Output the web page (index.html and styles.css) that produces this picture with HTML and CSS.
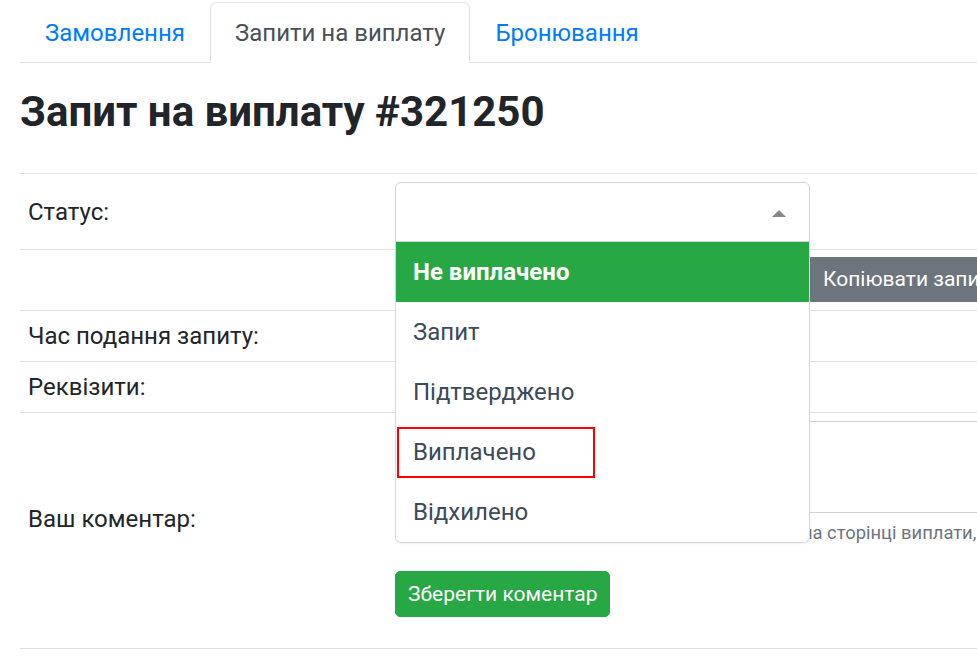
FILE: index.html
```html
<!DOCTYPE html>
<html lang="uk">
<head>
<meta charset="utf-8">
<title>Запит на виплату #321250</title>
<link rel="stylesheet" href="styles.css">
</head>
<body>
<div class="page">
  <nav class="tabs">
    <a class="tab" href="#">Замовлення</a>
    <a class="tab active" href="#">Запити на виплату</a>
    <a class="tab" href="#">Бронювання</a>
  </nav>

  <h1 class="title">Запит на виплату #321250</h1>

  <div class="details">
    <div class="row row-ctrl">
      <div class="label">Статус:</div>
      <div class="value">
        <div class="select-wrap">
          <div class="select open"><span class="arrow"></span></div>
          <ul class="dropdown">
            <li class="opt selected">Не виплачено</li>
            <li class="opt">Запит</li>
            <li class="opt">Підтверджено</li>
            <li class="opt">Виплачено</li>
            <li class="opt">Відхилено</li>
            <li class="mark"></li>
          </ul>
        </div>
      </div>
    </div>

    <div class="row row-ctrl">
      <div class="label"></div>
      <div class="value inline">
        <input class="link-input" type="text" readonly value="">
        <button class="btn btn-gray">Копіювати запит</button>
      </div>
    </div>

    <div class="row">
      <div class="label">Час подання запиту:</div>
      <div class="value"></div>
    </div>

    <div class="row">
      <div class="label">Реквізити:</div>
      <div class="value"></div>
    </div>

    <div class="row row-comment">
      <div class="label">Ваш коментар:</div>
      <div class="value">
        <textarea class="comment" rows="2"></textarea>
        <small class="help">Ваш коментар буде відображатися партнерові на сторінці виплати, а також у листі-сповіщенні.</small>
        <button class="btn btn-green">Зберегти коментар</button>
      </div>
    </div>
  </div>
</div>
</body>
</html>
```

FILE: styles.css
```css
html, body {
  margin: 0;
  padding: 0;
  overflow: hidden;
  background: #fff;
}

body {
  font-family: Roboto, "Noto Sans", "Liberation Sans", sans-serif;
  font-size: 24px;
  line-height: 1.5;
  color: #212529;
}

.page {
  width: 1200px;
  margin-left: 20px;
  padding-top: 2px;
}

/* Tabs */
.tabs {
  display: flex;
  border-bottom: 1px solid #dee2e6;
}

.tab {
  display: block;
  padding: 11.5px 24px;
  margin-bottom: -1px;
  border: 1px solid transparent;
  border-top-left-radius: 6px;
  border-top-right-radius: 6px;
  color: #007bff;
  text-decoration: none;
  line-height: 36px;
}

.tab.active {
  color: #495057;
  background: #fff;
  border-color: #dee2e6 #dee2e6 #fff;
}

/* Heading */
.title {
  margin: 24px 0 36px;
  font-size: 42px;
  font-weight: 700;
  line-height: 1.2;
  color: #212529;
}

/* Detail rows */
.details {
  border-bottom: 1px solid #dee2e6;
}

.row {
  display: grid;
  grid-template-columns: 375px 1fr;
  align-items: center;
  border-top: 1px solid #dee2e6;
  padding: 7.2px 0;
  min-height: 36px;
}

.label {
  padding-left: 8px;
  line-height: 36px;
}

.value {
  min-width: 0;
}

.inline {
  display: flex;
  align-items: center;
}

/* Select */
.select-wrap {
  position: relative;
  width: 415px;
}

.select {
  box-sizing: border-box;
  height: 60px;
  border: 1px solid #ced4da;
  border-radius: 6px;
  background: #fff;
  position: relative;
}

.select.open {
  border-bottom-left-radius: 0;
  border-bottom-right-radius: 0;
}

.arrow {
  position: absolute;
  right: 23px;
  top: 27px;
  width: 0;
  height: 0;
  border-style: solid;
  border-width: 0 7px 7px 7px;
  border-color: transparent transparent #888 transparent;
}

.dropdown {
  position: absolute;
  left: 0;
  top: 60px;
  z-index: 10;
  box-sizing: border-box;
  width: 415px;
  margin: 0;
  padding: 0;
  list-style: none;
  background: #fff;
  border: 1px solid #d6d9dc;
  border-top: none;
  border-bottom-left-radius: 6px;
  border-bottom-right-radius: 6px;
  box-shadow: 0 1px 2px rgba(0, 0, 0, 0.06);
}

.opt {
  padding: 12px 17px;
  line-height: 36px;
  color: #3c4a5a;
}

.opt.selected {
  background: #28a745;
  color: #fff;
  font-weight: 700;
}

.mark {
  position: absolute;
  left: 1px;
  top: 185px;
  width: 194px;
  height: 47px;
  border: 2px solid #ff0000;
}

/* Row 2 */
.link-input {
  box-sizing: border-box;
  width: 415px;
  height: 45px;
  margin: 0;
  border: 1px solid #ced4da;
  border-radius: 5px;
  font: inherit;
  background: #fff;
}

.btn {
  display: inline-block;
  box-sizing: border-box;
  height: 45.5px;
  padding: 0 12px;
  border: 1px solid transparent;
  border-radius: 5px;
  font-family: inherit;
  font-size: 21px;
  line-height: 43px;
  color: #fff;
  white-space: nowrap;
  cursor: pointer;
}

.btn-gray {
  background: #6c757d;
  border-color: #6c757d;
  border-radius: 0 5px 5px 0;
}

.btn-green {
  background: #28a745;
  border-color: #28a745;
  margin-top: 24px;
  display: block;
}

/* Comment row */
.row-comment {
  padding-bottom: 31px;
}

.comment {
  display: block;
  box-sizing: border-box;
  width: 100%;
  height: 92px;
  margin: 0;
  padding: 9px 18px;
  border: 1px solid #ced4da;
  border-radius: 5px;
  font: inherit;
  resize: none;
}

.help {
  display: block;
  margin-top: 6px;
  font-size: 18.4px;
  line-height: 28.8px;
  color: #6c757d;
  white-space: nowrap;
}
```
